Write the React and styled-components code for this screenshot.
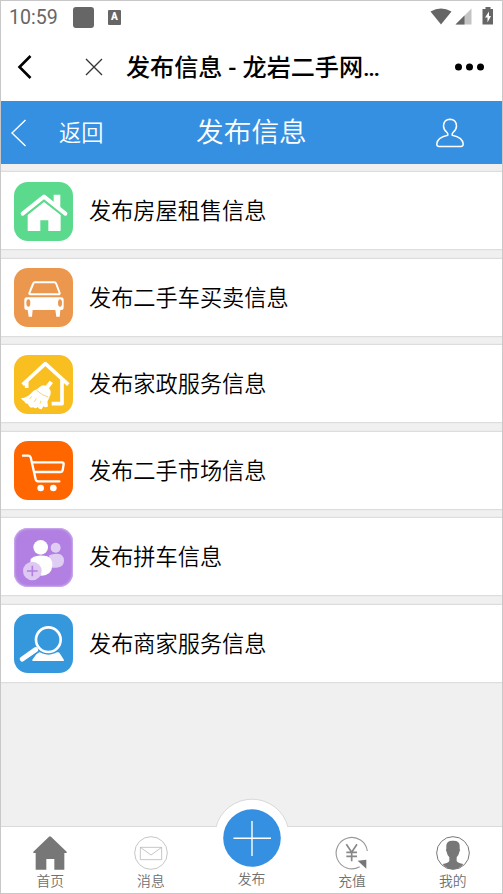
import React from 'react'
import styled, { createGlobalStyle } from 'styled-components'

const GlobalStyle = createGlobalStyle`
  * {
    box-sizing: border-box;
  }
  body {
    margin: 0;
    font-family: 'Noto Sans CJK SC', 'Noto Sans', sans-serif;
  }
`

const Screen = styled.div`
  display: flex;
  flex-direction: column;
  width: 503px;
  height: 894px;
  border: 1px solid #c8c8c8;
  background: #f0f0f0;
  overflow: hidden;
`

const StatusBar = styled.div`
  display: flex;
  align-items: center;
  height: 32px;
  padding: 0 8px;
  background: #ffffff;
  color: #666666;
`

const Clock = styled.span`
  width: 64px;
  padding-top: 1px;
  font-family: Roboto, sans-serif;
  font-size: 19.6px;
  line-height: 32px;
`

const AppSquare = styled.span`
  width: 21px;
  height: 21px;
  margin-right: 14px;
  border-radius: 3px;
  background: #666666;
`

const KeyboardBadge = styled.span`
  width: 13px;
  height: 15px;
  border-radius: 1px;
  background: #666666;
  color: #ffffff;
  font-family: Roboto, sans-serif;
  font-size: 10px;
  font-weight: 900;
  line-height: 14px;
  text-align: center;
`

const StatusIcons = styled.svg`
  width: 64px;
  height: 20px;
  margin-left: auto;
`

const BrowserBar = styled.div`
  display: flex;
  align-items: center;
  height: 68px;
  background: #ffffff;
`

const BarIcon = styled.svg`
  flex: none;
  width: ${props => props.$width}px;
  height: ${props => props.$height}px;
  margin-left: ${props => props.$left || 0}px;
  fill: none;
`

const PageTitle = styled.div`
  flex: 1;
  margin-left: 23px;
  padding-top: 1px;
  color: #000000;
  font-family: Roboto, 'Noto Sans CJK SC', sans-serif;
  font-size: 24.1px;
  font-weight: 500;
  line-height: 36px;
  white-space: nowrap;
`

const Dots = styled.span`
  letter-spacing: -1.4px;
`

const Header = styled.header`
  display: flex;
  align-items: center;
  height: 63px;
  background: #3590e2;
  color: #ffffff;
`

const BackLabel = styled.div`
  width: 137px;
  margin-left: 32px;
  padding-bottom: 3px;
  font-size: 22.2px;
  font-weight: 350;
  line-height: 32px;
`

const HeaderTitle = styled.h1`
  width: 240px;
  margin: 0;
  padding-bottom: 5px;
  font-size: 27.7px;
  font-weight: 350;
  line-height: 40px;
`

const List = styled.main`
  display: flex;
  flex: 1;
  flex-direction: column;
  gap: 7.6px;
  padding-top: 7px;
`

const Row = styled.div`
  display: flex;
  align-items: center;
  height: 79px;
  padding: 1px 0 0 13px;
  border-top: 1px solid #dddddd;
  border-bottom: 1px solid #dddddd;
  background: #ffffff;
  box-shadow: 0 0 1px #dddddd;
`

const Tile = styled.svg`
  width: 59px;
  height: 59px;
  margin-right: 16px;
  border-radius: 14px;
  background: ${props => props.$color};
  box-shadow: ${props => (props.$rim ? `inset 0 0 2px 1px ${props.$rim}` : 'none')};
  fill: #ffffff;
`

const RowLabel = styled.span`
  padding-bottom: 4px;
  color: #000000;
  font-size: 22.2px;
  font-weight: 350;
  line-height: 32px;
`

const TabBar = styled.nav`
  position: relative;
  display: flex;
  height: 67px;
  margin: 0 -1px;
  border-top: 1px solid #dadada;
  background: #ffffff;
`

const Tab = styled.div`
  display: flex;
  flex: 1;
  flex-direction: column;
  align-items: center;
  justify-content: flex-end;
  padding-bottom: ${props => (props.$raised ? 5 : 3)}px;
`

const TabIcon = styled.svg`
  width: 34px;
  height: 34px;
  fill: none;
`

const TabLabel = styled.span`
  position: relative;
  color: #707070;
  font-size: 13.8px;
  font-weight: 350;
  line-height: 20px;
`

// round bump that sticks out above the tab bar
const Bump = styled.svg`
  position: absolute;
  left: 50%;
  top: -30px;
  width: 78px;
  height: 72px;
  margin-left: -39px;
`

const HouseArt = () => (
  <>
    <path
      d='M26 95L90 44L154 95'
      fill='none'
      stroke='#fff'
      strokeWidth='12'
      strokeLinecap='round'
      strokeLinejoin='round'
    />
    <path d='M119 38H139V78L119 62Z' />
    <path d='M90 60L140 99V145Q140 147 138 147H103V115H79V147H43Q41 147 41 145V99Z' />
  </>
)

const CarArt = () => (
  <>
    <path
      d='M63 43H121Q125 43 127 48L137 75Q138 79 133 79H49Q45 79 46 75L57 48Q59 43 63 43Z'
      fill='none'
      stroke='#fff'
      strokeWidth='6'
    />
    <path d='M38 88H142Q149 88 149 96V119Q149 126 142 126H139L137 146H127L124 126H56L54 146H44L41 126H38Q31 126 31 119V96Q31 88 38 88Z' />
    <ellipse cx='43' cy='105' rx='6' ry='11' fill='#eb984e' />
    <ellipse cx='138' cy='105' rx='6' ry='11' fill='#eb984e' />
  </>
)

const BroomArt = () => (
  <>
    <path
      d='M26 89L94 26L163 89M38 79V99M144 74V146H113'
      fill='none'
      stroke='#fff'
      strokeWidth='11'
      strokeLinejoin='round'
    />
    <path d='M107 77L117 84L105 100Q113 108 109 120Q104 133 100 140L102 154Q95 160 88 154L83 163Q75 164 71 156Q64 163 58 157L51 158Q43 154 42 146Q33 147 32 140Q25 136 20 130Q37 129 49 117Q58 105 70 102L78 95Q88 88 95 92Z' />
    <path
      d='M68 106Q85 122 103 126M53 124L47 132M67 130L61 141M81 137L78 146'
      fill='none'
      stroke='#f9bf20'
      strokeWidth='2'
    />
  </>
)

const CartArt = () => (
  <>
    <path
      d='M27 44H43Q48 44 50 49L65 115Q67 121 73 121H136M57 64H144Q149 64 149 69L146 88Q145 93 140 93H65'
      fill='none'
      stroke='#fff'
      strokeWidth='7'
      strokeLinecap='round'
      strokeLinejoin='round'
    />
    <circle cx='80' cy='141' r='10' />
    <circle cx='118' cy='141' r='10' />
  </>
)

const PeopleArt = () => (
  <>
    <g fill='#e0cdf3'>
      <circle cx='125' cy='59' r='15' />
      <path d='M105 82Q128 73 143 81Q150 87 150 99Q149 117 128 119H112Z' />
    </g>
    <circle cx='80' cy='58' r='22' />
    <path d='M50 93Q58 84 72 83Q102 81 110 92Q115 99 115 112Q114 141 84 143Q70 143 48 120Z' />
    <circle cx='55' cy='129' r='28' fill='#dec9f2' />
    <path d='M55 113V145M39 129H71' stroke='#b180e2' strokeWidth='5' />
  </>
)

const SearchArt = () => (
  <>
    <path d='M76 115H131Q136 115 138 119L150 138Q151 141 147 141H58Q53 141 55 137L67 121Z' />
    <circle cx='103' cy='77' r='45' fill='#3698dc' />
    <circle cx='103' cy='77' r='37' fill='none' stroke='#fff' strokeWidth='8' />
    <path d='M25 135L66 107' stroke='#3698dc' strokeWidth='20' />
    <path d='M25 135L65 107' stroke='#fff' strokeWidth='15' strokeLinecap='round' />
  </>
)

const categories = [
  { label: '发布房屋租售信息', color: '#5bd98c', Art: HouseArt },
  { label: '发布二手车买卖信息', color: '#eb984e', Art: CarArt },
  { label: '发布家政服务信息', color: '#f9bf20', Art: BroomArt },
  { label: '发布二手市场信息', color: '#ff6600', Art: CartArt },
  { label: '发布拼车信息', color: '#b180e2', rim: '#ceb0ee', Art: PeopleArt },
  { label: '发布商家服务信息', color: '#3698dc', Art: SearchArt }
]

const HomeTab = () => (
  <path
    d='M48 2Q51 0 54 2L101 47V51H94V101H64V69H40V101H8V51H1V47Z'
    fill='#777777'
  />
)

const MessageTab = () => (
  <g stroke='#b8b8b8' strokeWidth='2.4'>
    <circle cx='51' cy='51' r='49' />
    <path d='M19 34H83V71H19ZM19 34L51 57L83 34' />
  </g>
)

const RechargeTab = () => (
  <>
    <path d='M97 45A47 47 0 1 0 74 92' stroke='#999999' strokeWidth='3.4' />
    <path d='M34 25L50 49L66 25M50 49V76M34 49H66M34 61H66' stroke='#888888' strokeWidth='5' />
    <path d='M68 74L94 71V98Z' fill='#777777' />
  </>
)

const MeTab = () => (
  <>
    <circle cx='51' cy='51' r='49' stroke='#777777' strokeWidth='3' />
    <path
      d='M51 14Q70 13 71 28V38Q74 41 70 48Q68 59 62 64V75Q65 81 82 84Q70 100 51 100Q32 100 20 84Q37 81 40 75V64Q34 59 32 48Q28 41 31 38V28Q32 13 51 14Z'
      fill='#777777'
    />
  </>
)

const tabs = [
  { label: '首页', Icon: HomeTab },
  { label: '消息', Icon: MessageTab },
  { label: '发布' },
  { label: '充值', Icon: RechargeTab },
  { label: '我的', Icon: MeTab }
]

const App = () => (
  <>
    <GlobalStyle />
    <Screen>
      <StatusBar>
        <Clock>10:59</Clock>
        <AppSquare />
        <KeyboardBadge>A</KeyboardBadge>
        <StatusIcons viewBox='0 0 64 20'>
          <path d='M0.5 4.5Q11 -1.5 21.5 4.5L11 17.5Z' fill='#666666' />
          <path d='M25.5 17.5L41.5 1.5V17.5Z' fill='#c4c4c4' />
          <path d='M25.5 17.5L34.5 8.5V17.5Z' fill='#666666' />
          <path d='M55.5 0H60.5V2H63V17.5H52.5V2H55.5Z' fill='#666666' />
          <path d='M59 4.5L55 10.5H57.5V15.5L61 9H59Z' fill='#ffffff' />
        </StatusIcons>
      </StatusBar>
      <BrowserBar>
        <BarIcon $width={16} $height={26} $left={16} viewBox='0 0 16 26'>
          <path d='M13.5 2L2.5 13L13.5 24' stroke='#000000' strokeWidth='2.6' />
        </BarIcon>
        <BarIcon $width={18} $height={18} $left={52} viewBox='0 0 18 18'>
          <path d='M1 1L17 17M17 1L1 17' stroke='#333333' strokeWidth='1.3' />
        </BarIcon>
        <PageTitle>
          发布信息 - 龙岩二手网<Dots>...</Dots>
        </PageTitle>
        <BarIcon $width={48} $height={8} viewBox='0 0 48 8'>
          <g fill='#000000'>
            <circle cx='4.5' cy='4' r='3.5' />
            <circle cx='15.5' cy='4' r='3.5' />
            <circle cx='26.5' cy='4' r='3.5' />
          </g>
        </BarIcon>
      </BrowserBar>
      <Header>
        <BarIcon $width={16} $height={28} $left={10} viewBox='0 0 16 28'>
          <path d='M14.5 1L1 14L14.5 27' stroke='#ffffff' strokeWidth='1.4' />
        </BarIcon>
        <BackLabel>返回</BackLabel>
        <HeaderTitle>发布信息</HeaderTitle>
        <BarIcon $width={28} $height={30} viewBox='0 0 28 30'>
          <path
            d='M11.8 17.2Q12.3 15.8 11 14.5Q7.5 11.5 7.5 8Q7.8 1.5 14 1.3Q20.2 1.5 20.5 8Q20.5 11.5 17 14.5Q15.7 15.8 16.2 17.2Q26.8 19.3 27.2 26Q27.2 28.4 25 28.4H3Q.8 28.4 .8 26Q1.2 19.3 11.8 17.2Z'
            stroke='#ffffff'
            strokeWidth='1.5'
          />
        </BarIcon>
      </Header>
      <List>
        {categories.map(({ label, color, rim, Art }) => (
          <Row key={label}>
            <Tile $color={color} $rim={rim} viewBox='0 0 177 177'>
              <Art />
            </Tile>
            <RowLabel>{label}</RowLabel>
          </Row>
        ))}
      </List>
      <TabBar>
        <Bump viewBox='0 0 78 72'>
          <path d='M3 30.5A37.2 37.2 0 0 1 75 30.5V42H3Z' fill='#ffffff' />
          <path d='M3 30A37.2 37.2 0 0 1 75 30' fill='none' stroke='#dadada' />
          <circle cx='39' cy='41' r='28.8' fill='#3590e2' />
          <path d='M39 24V59M20.5 41.2H58' stroke='#ffffff' strokeWidth='1.4' />
        </Bump>
        {tabs.map(({ label, Icon }) => (
          <Tab key={label} $raised={!Icon}>
            {Icon && (
              <TabIcon viewBox='0 0 102 102'>
                <Icon />
              </TabIcon>
            )}
            <TabLabel>{label}</TabLabel>
          </Tab>
        ))}
      </TabBar>
    </Screen>
  </>
)

export default App
